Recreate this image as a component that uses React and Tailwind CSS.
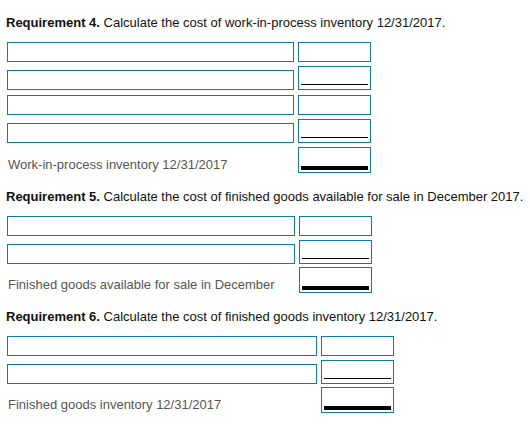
import React from "react";

const sections = [
  {
    title: "Requirement 4.",
    text: " Calculate the cost of work-in-process inventory 12/31/2017.",
    bigWidth: "w-[287px]",
    rows: [
      { type: "plain", gap: "mt-0" },
      { type: "under", gap: "mt-1" },
      { type: "plain", gap: "mt-[5px]" },
      { type: "under", gap: "mt-1" },
      { type: "total", gap: "mt-[4px]", label: "Work-in-process inventory 12/31/2017" },
    ],
  },
  {
    title: "Requirement 5.",
    text: " Calculate the cost of finished goods available for sale in December 2017.",
    bigWidth: "w-[288px]",
    rows: [
      { type: "plain", gap: "mt-0" },
      { type: "under", gap: "mt-1" },
      { type: "total", gap: "mt-[3px]", label: "Finished goods available for sale in December" },
    ],
  },
  {
    title: "Requirement 6.",
    text: " Calculate the cost of finished goods inventory 12/31/2017.",
    bigWidth: "w-[310px]",
    rows: [
      { type: "plain", gap: "mt-0" },
      { type: "under", gap: "mt-1" },
      { type: "total", gap: "mt-[3px]", label: "Finished goods inventory 12/31/2017" },
    ],
  },
];

const Row = ({ row, bigWidth }) => {
  const smallHeight =
    row.type === "plain" ? "h-5" : row.type === "under" ? "h-6" : "h-[26px]";

  return (
    <div className={`flex items-end gap-[4px] ${row.gap}`}>
      {row.type === "total" ? (
        <div className={`${bigWidth} text-[13px] leading-4 text-[#555] pl-px`}>
          {row.label}
        </div>
      ) : (
        <div className={`${bigWidth} h-5 border border-[#137aa0] bg-white`} />
      )}
      <div
        className={`w-[73px] ${smallHeight} border border-[#137aa0] bg-white flex flex-col justify-end px-[2px] ${
          row.type === "under" ? "pb-[4px]" : "pb-[2px]"
        }`}
      >
        {row.type === "under" && <div className="h-px bg-black" />}
        {row.type === "total" && <div className="h-[4px] bg-black" />}
      </div>
    </div>
  );
};

export default function App() {
  return (
    <div className="w-[530px] h-[437px] bg-white pt-[15px] pl-[6px] font-['Liberation_Sans',Arial,sans-serif] text-[#111]">
      {sections.map((s, i) => (
        <div key={i} className={i === 0 ? "" : "mt-4"}>
          <h2 className="text-[13px] leading-4 font-normal">
            <span className="font-bold">{s.title}</span>
            {s.text}
          </h2>
          <div className="mt-[11px] pl-px">
            {s.rows.map((r, j) => (
              <Row key={j} row={r} bigWidth={s.bigWidth} />
            ))}
          </div>
        </div>
      ))}
    </div>
  );
}
